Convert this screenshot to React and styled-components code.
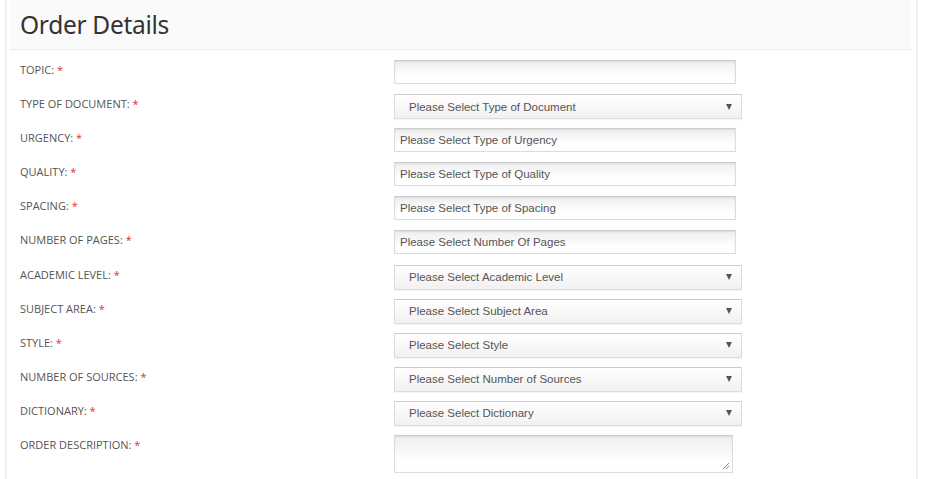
import React from 'react';
import styled, { createGlobalStyle } from 'styled-components';

const GlobalStyle = createGlobalStyle`
  body {
    margin: 0;
    background: #fff;
    font-family: "Open Sans", Arial, sans-serif;
  }
`;

const Page = styled.div`
  width: 926px;
  height: 479px;
  padding: 0 8px 0 5px;
  box-sizing: border-box;
  overflow: hidden;
`;

const Panel = styled.div`
  height: 100%;
  border-left: 2px solid #f0f0f0;
  border-right: 2px solid #f0f0f0;
  padding: 0 5px 0 3px;
`;

const Header = styled.div`
  height: 49px;
  background: #fafafa;
  border-bottom: 1px solid #ececec;
  display: flex;
  align-items: center;
  padding-left: 10px;
`;

const Title = styled.h1`
  margin: 0;
  font-family: "Noto Sans", "Open Sans", sans-serif;
  font-weight: 400;
  font-size: 24.5px;
  color: #333;
  letter-spacing: -0.3px;
`;

const Form = styled.div`
  padding-top: 10px;
  padding-left: 10px;
`;

const Row = styled.div`
  display: flex;
  align-items: flex-start;
  height: 34.1px;
`;

const Label = styled.label`
  width: 374px;
  padding-top: 2px;
  font-size: 11px;
  color: #555;
  text-transform: uppercase;
  letter-spacing: 0;
  font-family: "Open Sans", sans-serif;
`;

const Star = styled.span`
  color: #e03030;
`;

const fieldBase = `
  box-sizing: border-box;
  border: 1px solid #dcdcdc;
  border-top-color: #cbcbcb;
  font-family: "Liberation Sans", Arial, sans-serif;
  font-size: 11.5px;
  color: #555;
`;

const TextBox = styled.div`
  ${fieldBase}
  width: ${p => p.$w || 342}px;
  height: ${p => p.$h || 24}px;
  padding: 0 5px;
  display: flex;
  align-items: ${p => (p.$area ? 'flex-start' : 'center')};
  background: linear-gradient(#eeeeee, #ffffff 70%);
  box-shadow: inset 0 1px 2px rgba(0, 0, 0, 0.08);
  position: relative;
`;

const Select = styled.div`
  ${fieldBase}
  width: 348px;
  height: 25px;
  padding: 0 9px 0 14px;
  display: flex;
  align-items: center;
  justify-content: space-between;
  background: linear-gradient(#ffffff, #f1f1f1);
  box-shadow: 0 1px 1px rgba(0, 0, 0, 0.04);
`;

const Arrow = styled.span`
  width: 0;
  height: 0;
  border-left: 3px solid transparent;
  border-right: 3px solid transparent;
  border-top: 6px solid #555;
`;

const Grip = styled.svg`
  position: absolute;
  right: 2px;
  bottom: 2px;
`;

const fields = [
  { label: 'Topic', type: 'text', value: '' },
  { label: 'Type of Document', type: 'select', value: 'Please Select Type of Document' },
  { label: 'Urgency', type: 'text', value: 'Please Select Type of Urgency' },
  { label: 'Quality', type: 'text', value: 'Please Select Type of Quality' },
  { label: 'Spacing', type: 'text', value: 'Please Select Type of Spacing' },
  { label: 'Number of Pages', type: 'text', value: 'Please Select Number Of Pages' },
  { label: 'Academic Level', type: 'select', value: 'Please Select Academic Level' },
  { label: 'Subject Area', type: 'select', value: 'Please Select Subject Area' },
  { label: 'Style', type: 'select', value: 'Please Select Style' },
  { label: 'Number of Sources', type: 'select', value: 'Please Select Number of Sources' },
  { label: 'Dictionary', type: 'select', value: 'Please Select Dictionary' },
  { label: 'Order Description', type: 'area', value: '' },
];

const Field = ({ type, value }) => {
  if (type === 'select') {
    return (
      <Select>
        <span>{value}</span>
        <Arrow />
      </Select>
    );
  }
  if (type === 'area') {
    return (
      <TextBox $w={339} $h={38} $area>
        <Grip width="8" height="8" viewBox="0 0 8 8">
          <path d="M7 1 L1 7 M7 4 L4 7" stroke="#888" strokeWidth="1" />
        </Grip>
      </TextBox>
    );
  }
  return <TextBox>{value}</TextBox>;
};

const App = () => (
  <Page>
    <GlobalStyle />
    <Panel>
      <Header>
        <Title>Order Details</Title>
      </Header>
      <Form>
        {fields.map(f => (
          <Row key={f.label}>
            <Label>
              {f.label}: <Star>*</Star>
            </Label>
            <Field type={f.type} value={f.value} />
          </Row>
        ))}
      </Form>
    </Panel>
  </Page>
);

export default App;
